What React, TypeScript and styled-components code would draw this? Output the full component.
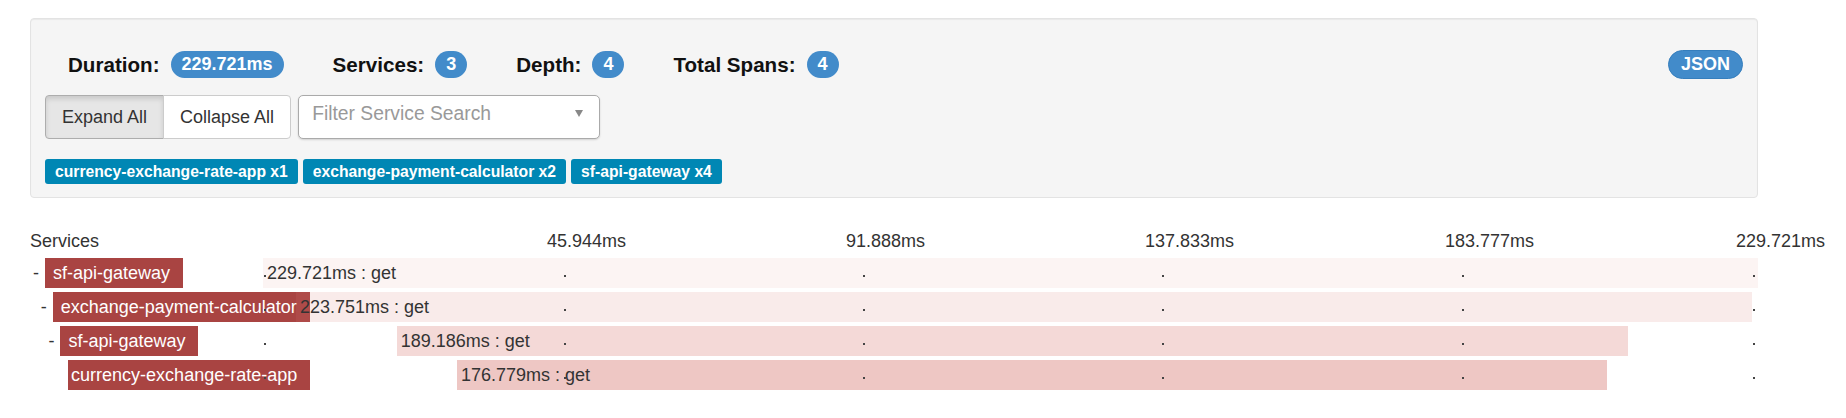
import styled, { createGlobalStyle } from 'styled-components';

const GlobalStyle = createGlobalStyle`
  body {
    margin: 0;
    background: #fff;
    font-family: "Liberation Sans", Arial, sans-serif;
    color: #333;
  }
`;

const Page = styled.div`
  width: 1728px;
  padding: 18px 0 0 30px;
`;

const Well = styled.div`
  display: flex;
  flex-direction: column;
  box-sizing: border-box;
  height: 180px;
  padding: 31px 14px 0 14px;
  background: #f5f5f5;
  border: 1px solid #e3e3e3;
  border-radius: 4px;
  box-shadow: inset 0 1px 1px rgba(0, 0, 0, 0.05);
`;

const StatsRow = styled.div`
  display: flex;
  align-items: center;
  height: 29px;
  padding-left: 23px;
`;

const Stat = styled.div`
  display: flex;
  align-items: center;
  gap: 11px;
  margin-right: 49px;
`;

const StatLabel = styled.span`
  font-size: 20.6px;
  font-weight: 700;
  color: #111;
`;

const Badge = styled.span`
  display: inline-block;
  box-sizing: border-box;
  min-width: 31px;
  height: 27px;
  line-height: 27px;
  padding: 0 11px;
  border-radius: 14px;
  background: #428bca;
  color: #fff;
  font-size: 18px;
  font-weight: 700;
  text-align: center;
`;

const JsonButton = styled.button`
  margin-left: auto;
  height: 29px;
  padding: 0 12px;
  border: 1px solid #357ebd;
  border-radius: 15px;
  background: #428bca;
  color: #fff;
  font-family: inherit;
  font-size: 18px;
  font-weight: 700;
  line-height: 27px;
`;

const Controls = styled.div`
  display: flex;
  gap: 7px;
  margin-top: 16px;
  height: 44px;
`;

const ButtonGroup = styled.div`
  display: flex;
`;

const GroupButton = styled.button<{ $active?: boolean }>`
  height: 44px;
  padding: 0 16px;
  font-family: inherit;
  font-size: 18px;
  color: #333;
  background: ${(p) => (p.$active ? '#e6e6e6' : '#fff')};
  border: 1px solid ${(p) => (p.$active ? '#adadad' : '#ccc')};
  box-shadow: ${(p) => (p.$active ? 'inset 0 3px 5px rgba(0,0,0,.125)' : 'none')};
  border-radius: 4px 0 0 4px;

  & + & {
    margin-left: -1px;
    border-radius: 0 4px 4px 0;
  }
`;

const Select = styled.div`
  display: flex;
  justify-content: space-between;
  align-items: flex-start;
  box-sizing: border-box;
  width: 302px;
  height: 44px;
  padding: 7px 16px 0 13px;
  background: #fff;
  border: 1px solid #aaa;
  border-radius: 5px;
  box-shadow: 0 1px 2px rgba(0, 0, 0, 0.15);
`;

const Placeholder = styled.span`
  font-size: 19.3px;
  color: #999;
`;

const Caret = styled.span`
  margin-top: 7px;
  width: 0;
  height: 0;
  border-left: 4px solid transparent;
  border-right: 4px solid transparent;
  border-top: 7px solid #888;
`;

const Tags = styled.div`
  display: flex;
  gap: 5px;
  margin-top: 20px;
`;

const Tag = styled.span`
  height: 25px;
  line-height: 25px;
  padding: 0 10px;
  border-radius: 3px;
  background: #0087b4;
  color: #fff;
  font-size: 15.7px;
  font-weight: 700;
  white-space: nowrap;
`;

const Timeline = styled.div`
  margin-top: 30px;
  font-size: 18px;
  color: #333;
`;

const Header = styled.div`
  display: flex;
  height: 26px;
  line-height: 26px;
  margin-bottom: 4px;
`;

const NameColumn = styled.div`
  width: 233px;
  flex-shrink: 0;
`;

const Axis = styled.div`
  position: relative;
  width: 1495px;
  flex-shrink: 0;
`;

const AxisLabel = styled.span`
  position: absolute;
  top: 0;
  white-space: nowrap;
`;

const Rows = styled.div`
  display: flex;
  flex-direction: column;
  gap: 4px;
`;

const Row = styled.div`
  display: flex;
  height: 30px;
`;

const LabelCell = styled.div<{ $depth: number }>`
  display: flex;
  align-items: center;
  box-sizing: border-box;
  width: 233px;
  flex-shrink: 0;
  padding-left: ${(p) => 3 + p.$depth * 7.7}px;
`;

const Toggle = styled.span`
  width: 12px;
  flex-shrink: 0;
  line-height: 30px;
`;

const ServiceName = styled.span<{ $padLeft: number }>`
  flex-shrink: 0;
  height: 30px;
  line-height: 30px;
  padding: 0 13px 0 ${(p) => p.$padLeft}px;
  background: #a94442;
  color: #fff;
  white-space: nowrap;
`;

const Track = styled.div`
  position: relative;
  z-index: 1;
  width: 1495px;
  flex-shrink: 0;
  height: 30px;
`;

const Bar = styled.div`
  position: absolute;
  top: 0;
  bottom: 0;
  box-sizing: border-box;
  padding-left: 4px;
  line-height: 30px;
  white-space: nowrap;
`;

const TickDot = styled.span`
  position: absolute;
  top: 17px;
  width: 2px;
  height: 2px;
  background: #444;
  z-index: 2;
`;

const TOTAL = 229.721;

const axisLabels = [
  { text: '45.944ms', left: 284 },
  { text: '91.888ms', left: 583 },
  { text: '137.833ms', left: 882 },
  { text: '183.777ms', left: 1182 },
  { text: '229.721ms', left: 1473 },
];

const dots = [1, 301, 600, 899, 1199, 1490];

const spans = [
  { name: 'sf-api-gateway', depth: 0, toggle: true, start: 0, duration: 229.721, alpha: 0.083, padLeft: 8 },
  { name: 'exchange-payment-calculator', depth: 1, toggle: true, start: 5.07, duration: 223.751, alpha: 0.15, padLeft: 8 },
  { name: 'sf-api-gateway', depth: 2, toggle: true, start: 20.54, duration: 189.186, alpha: 0.286, padLeft: 8 },
  { name: 'currency-exchange-rate-app', depth: 3, toggle: false, start: 29.81, duration: 176.779, alpha: 0.42, padLeft: 3 },
];

export default function App() {
  return (
    <Page>
      <GlobalStyle />
      <Well>
        <StatsRow>
          <Stat>
            <StatLabel>Duration:</StatLabel>
            <Badge>229.721ms</Badge>
          </Stat>
          <Stat>
            <StatLabel>Services:</StatLabel>
            <Badge>3</Badge>
          </Stat>
          <Stat>
            <StatLabel>Depth:</StatLabel>
            <Badge>4</Badge>
          </Stat>
          <Stat>
            <StatLabel>Total Spans:</StatLabel>
            <Badge>4</Badge>
          </Stat>
          <JsonButton>JSON</JsonButton>
        </StatsRow>

        <Controls>
          <ButtonGroup>
            <GroupButton $active>Expand All</GroupButton>
            <GroupButton>Collapse All</GroupButton>
          </ButtonGroup>
          <Select>
            <Placeholder>Filter Service Search</Placeholder>
            <Caret />
          </Select>
        </Controls>

        <Tags>
          <Tag>currency-exchange-rate-app x1</Tag>
          <Tag>exchange-payment-calculator x2</Tag>
          <Tag>sf-api-gateway x4</Tag>
        </Tags>
      </Well>

      <Timeline>
        <Header>
          <NameColumn>Services</NameColumn>
          <Axis>
            {axisLabels.map((l) => (
              <AxisLabel key={l.text} style={{ left: l.left }}>
                {l.text}
              </AxisLabel>
            ))}
          </Axis>
        </Header>

        <Rows>
          {spans.map((s, i) => (
            <Row key={i}>
              <LabelCell $depth={s.depth}>
                <Toggle>{s.toggle ? '-' : ''}</Toggle>
                <ServiceName $padLeft={s.padLeft}>{s.name}</ServiceName>
              </LabelCell>
              <Track>
                <Bar
                  style={{
                    left: `${(s.start / TOTAL) * 100}%`,
                    width: `${(s.duration / TOTAL) * 100}%`,
                    background: `rgba(215, 122, 115, ${s.alpha})`,
                  }}
                >
                  {s.duration.toFixed(3)}ms : get
                </Bar>
                {dots.map((d) => (
                  <TickDot key={d} style={{ left: d }} />
                ))}
              </Track>
            </Row>
          ))}
        </Rows>
      </Timeline>
    </Page>
  );
}
